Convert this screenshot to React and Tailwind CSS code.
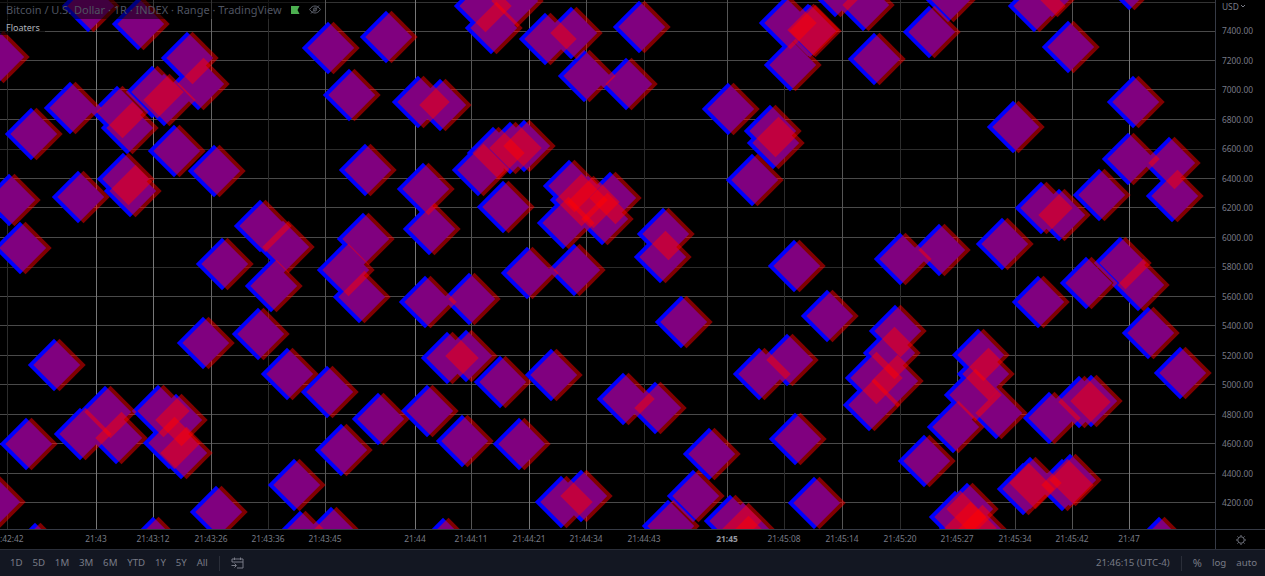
const FONT = 'font-["Noto_Sans",sans-serif]'

// centre of each blue diamond, the red one sits a bit to the right
const POINTS = [
  [88, 6], [138, 24], [-2, 57], [187, 58], [198, 84], [152, 92], [164, 100], [70, 108], [117, 112], [127, 128],
  [31, 134], [328, 48], [386, 37], [349, 95], [418, 102], [174, 151], [214, 171], [365, 170], [423, 189], [123, 179],
  [130, 191], [78, 197], [9, 200], [20, 248], [260, 226], [283, 247], [363, 239], [222, 264], [343, 270], [429, 229],
  [271, 286], [359, 297], [425, 302], [203, 343], [258, 334], [287, 374], [327, 392], [54, 365], [105, 412], [80, 434],
  [116, 438], [26, 444], [158, 411], [176, 420], [169, 443], [181, 453], [378, 419], [341, 450], [294, 485], [216, 512],
  [-6, 502], [35, 549], [153, 543], [300, 537], [331, 533],
  [480, 6], [512, 1], [491, 28], [545, 39], [571, 33], [639, 27], [584, 76], [626, 84], [785, 23], [790, 65],
  [728, 109], [770, 131], [773, 143], [752, 180], [478, 170], [524, 146], [510, 148], [493, 153], [503, 207],
  [440, 105], [569, 186], [610, 198], [563, 223], [602, 219], [576, 200], [588, 202], [663, 234], [660, 257],
  [794, 266], [527, 273], [574, 270], [469, 299], [681, 322], [827, 316], [447, 358], [466, 356], [500, 382], [551, 375],
  [427, 411], [462, 441], [519, 444], [623, 399], [655, 408], [709, 454], [795, 439], [759, 374], [787, 360],
  [561, 502], [581, 496], [693, 496], [668, 526], [730, 521], [743, 529], [743, 542], [443, 544], [814, 503],
  [929, 32], [948, -4], [874, 59], [1034, 6], [1052, -9], [1068, 47], [1133, 102], [1013, 127], [1129, -16],
  [1128, 159], [1169, 163], [1099, 195], [1172, 196], [1041, 208], [1059, 215], [900, 259], [939, 250], [1002, 244],
  [1120, 263], [808, 30], [810, 31], [863, 5], [835, -9],
  [1086, 283], [1138, 285], [1038, 302], [1148, 333], [1180, 373], [895, 331], [889, 353], [871, 378], [892, 381],
  [869, 405], [978, 355], [983, 374], [970, 395], [996, 413], [953, 427], [924, 461], [1049, 418], [1091, 401],
  [1079, 402], [1023, 489], [1030, 483], [1070, 480], [1062, 485], [955, 517], [967, 509], [965, 528],
  [977, 531], [1159, 543],
]

const H_LINES = [
  [2, '#333'], [31, '#4a4a4a'], [60, '#4a4a4a'], [89, '#4a4a4a'], [119, '#4a4a4a'], [149, '#2c2c2c'], [178, '#4a4a4a'],
  [207, '#4a4a4a'], [237, '#4a4a4a'], [267, '#2c2c2c'], [296, '#4a4a4a'], [325, '#4a4a4a'], [355, '#4a4a4a'],
  [384, '#4a4a4a'], [414, '#4a4a4a'], [443, '#4a4a4a'], [473, '#4a4a4a'], [502, '#4a4a4a'],
]

const TICKS = [
  [7, '21:42:42', '#2c2c2c'], [96, '21:43', '#777'], [153, '21:43:12', '#777'], [211, '21:43:26', '#666'],
  [268, '21:43:36', '#2c2c2c'], [325, '21:43:45', '#555'], [415, '21:44', '#777'], [471, '21:44:11', '#555'],
  [529, '21:44:21', '#777'], [586, '21:44:34', '#555'], [644, '21:44:43', '#2c2c2c'], [727, '21:45', '#555'],
  [784, '21:45:08', '#2c2c2c'], [842, '21:45:14', '#555'], [900, '21:45:20', '#2c2c2c'], [957, '21:45:27', '#555'],
  [1015, '21:45:34', '#444'], [1072, '21:45:42', '#555'], [1129, '21:47', '#777'],
]

const PRICES = [7400, 7200, 7000, 6800, 6600, 6400, 6200, 6000, 5800, 5600, 5400, 5200, 5000, 4800, 4600, 4400, 4200]
const RANGES = ['1D', '5D', '1M', '3M', '6M', 'YTD', '1Y', '5Y', 'All']

const R = 26.2
const OFFSET = 5.5
const diamond = (x, y) => `${x - R},${y} ${x},${y - R} ${x + R},${y} ${x},${y + R}`

function Chart() {
  return (
    <svg width="1215" height="529" className="block">
      {H_LINES.map(([y, c]) => <line key={y} x1="0" x2="1215" y1={y + 0.5} y2={y + 0.5} stroke={c} />)}
      {TICKS.map(([x, , c]) => <line key={x} x1={x + 0.5} x2={x + 0.5} y1="0" y2="529" stroke={c} />)}
      {POINTS.map(([x, y], i) => <polygon key={i} points={diamond(x, y)} fill="#0000ff" />)}
      {POINTS.map(([x, y], i) => <polygon key={i} points={diamond(x + OFFSET, y)} fill="#ff0000" fillOpacity="0.5" />)}
    </svg>
  )
}

function Legend() {
  return (
    <div className="absolute left-0 top-0 flex flex-col items-start">
      <div className="flex items-center h-[19px] pl-[6px] pr-[4px] bg-black/50">
        <span className="text-[11px] leading-none text-[#4f5461] whitespace-nowrap">
          Bitcoin / U.S. Dollar · 1R · INDEX · Range · TradingView
        </span>
        <svg width="9" height="8" viewBox="0 0 9 8" className="ml-[9px]">
          <path d="M0 0h8.5L6.5 4l2 4H0z" fill="#4caf50" />
        </svg>
        <svg width="12" height="9" viewBox="0 0 12 9" fill="none" stroke="#5d616c" className="ml-[9px]">
          <path d="M.6 4.5C2.2 2 4 1 6 1s3.800 1 5.400 3.500C9.800 7 8 8 6 8S2.200 7 .6 4.500z" />
          <circle cx="6" cy="4.500" r="1.600" />
          <path d="M2 8.500L10 .5" />
        </svg>
      </div>
      <div className="flex items-center h-[15px] pl-[6px] pr-[5px] mt-[1px] bg-black/60">
        <span className="text-[9px] leading-none text-[#b2b5be]">Floaters</span>
      </div>
    </div>
  )
}

function PriceAxis() {
  return (
    <div className="w-[50px] border-l border-[#363a45] flex flex-col pl-[6px] text-[8.4px] text-[#787b86]">
      <div className="h-[15px] mb-[2px] flex items-center">
        USD
        <svg width="6" height="4" viewBox="0 0 6 4" fill="none" stroke="#787b86" className="ml-[1px] mb-[3px]">
          <path d="M1 1l2 2 2-2" />
        </svg>
      </div>
      {PRICES.map((p) => (
        <div key={p} className="h-[29.5px] shrink-0 flex items-center">{p}.00</div>
      ))}
    </div>
  )
}

function TimeAxis() {
  return (
    <div className="h-[20px] flex border-t border-[#363a45] text-[8.4px] text-[#787b86]">
      <div className="relative flex-1 overflow-hidden">
        {TICKS.map(([x, label]) => (
          <span
            key={x}
            className={`absolute top-[3px] -translate-x-1/2 whitespace-nowrap ${label === '21:45' ? 'font-bold text-[#9598a1]' : ''}`}
            style={{ left: x }}
          >
            {label}
          </span>
        ))}
      </div>
      <div className="w-[50px] border-l border-[#363a45] flex items-center justify-center">
        <svg width="12" height="12" viewBox="0 0 12 12" fill="none" stroke="#787b86">
          <circle cx="6" cy="6" r="3.300" />
          <path d="M6 1v1M6 10v1M1 6h1M10 6h1M2.500 2.500l.7.7M8.800 8.800l.7.7M2.500 9.500l.7-.7M8.800 3.200l.7-.7" />
        </svg>
      </div>
    </div>
  )
}

function BottomBar() {
  return (
    <div className="h-[27px] bg-[#131722] border-t border-[#2a2e39] flex items-center text-[9.7px] text-[#787b86]">
      <div className="flex items-center gap-[9.8px] pl-[10px]">
        {RANGES.map((r) => <span key={r}>{r}</span>)}
      </div>
      <div className="w-px h-[15px] bg-[#2a2e39] ml-[11px]" />
      <svg width="13" height="12" viewBox="0 0 13 12" fill="none" stroke="#787b86" className="ml-[11px]">
        <path d="M1 5V2h11v9H6M1 5h11M3.500 .5v2.500M9.500 .5v2.500" />
        <path d="M.5 8.500H5M3.500 6.500l2 2-2 2" />
      </svg>
      <span className="ml-auto">21:46:15 (UTC-4)</span>
      <div className="w-px h-[15px] bg-[#2a2e39] ml-[11px]" />
      <span className="ml-[11px] text-[11px]">%</span>
      <span className="ml-[10px]">log</span>
      <span className="ml-[10px] mr-[8px]">auto</span>
    </div>
  )
}

export default function App() {
  return (
    <div className={`w-[1265px] h-[576px] bg-black flex flex-col overflow-hidden ${FONT}`}>
      <div className="h-[529px] flex overflow-hidden">
        <div className="relative w-[1215px]">
          <Chart />
          <Legend />
        </div>
        <PriceAxis />
      </div>
      <TimeAxis />
      <BottomBar />
    </div>
  )
}
